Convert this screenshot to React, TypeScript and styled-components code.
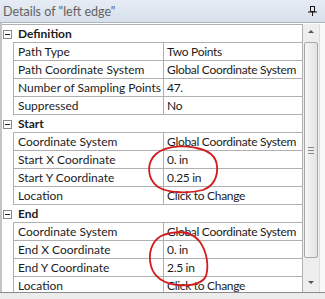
import React from 'react';
import styled, { createGlobalStyle } from 'styled-components';

type Prop = { label: string; value: string };
type Section = { title: string; rows: Prop[] };

const sections: Section[] = [
  {
    title: 'Definition',
    rows: [
      { label: 'Path Type', value: 'Two Points' },
      { label: 'Path Coordinate System', value: 'Global Coordinate System' },
      { label: 'Number of Sampling Points', value: '47.' },
      { label: 'Suppressed', value: 'No' },
    ],
  },
  {
    title: 'Start',
    rows: [
      { label: 'Coordinate System', value: 'Global Coordinate System' },
      { label: 'Start X Coordinate', value: '0. in' },
      { label: 'Start Y Coordinate', value: '0.25 in' },
      { label: 'Location', value: 'Click to Change' },
    ],
  },
  {
    title: 'End',
    rows: [
      { label: 'Coordinate System', value: 'Global Coordinate System' },
      { label: 'End X Coordinate', value: '0. in' },
      { label: 'End Y Coordinate', value: '2.5 in' },
      { label: 'Location', value: 'Click to Change' },
    ],
  },
];

export default function App() {
  return (
    <>
      <GlobalStyle />
      <Panel>
        <TitleBar>
          <Title>Details of "left edge"</Title>
          <PinIcon width="9" height="10" viewBox="0 0 9 10">
            <rect x="2.5" y="0.5" width="4" height="5" fill="none" stroke="#1a1a1a" />
            <line x1="0" y1="6" x2="9" y2="6" stroke="#1a1a1a" />
            <line x1="4.5" y1="6" x2="4.5" y2="10" stroke="#1a1a1a" />
          </PinIcon>
        </TitleBar>
        <Body>
          <Grid>
            {sections.map((s) => (
              <React.Fragment key={s.title}>
                <SectionRow>
                  <Gutter>
                    <Toggle />
                  </Gutter>
                  <SectionTitle>{s.title}</SectionTitle>
                </SectionRow>
                {s.rows.map((r, i) => (
                  <PropRow key={i}>
                    <Gutter $line />
                    <LabelCell>{r.label}</LabelCell>
                    <ValueCell>{r.value}</ValueCell>
                  </PropRow>
                ))}
              </React.Fragment>
            ))}
          </Grid>
          <ScrollBar>
            <Arrow $up />
            <Thumb>
              <Grip />
            </Thumb>
            <Arrow />
          </ScrollBar>
          <RightEdge />
        </Body>
        <Footer />
        <Marks width="325" height="299" viewBox="0 0 325 299">
          <path
            d="M 204 150 C 190 145, 168 144, 156 154 C 146 163, 147 179, 158 187 C 168 193, 188 194, 203 190 C 214 186, 218 176, 217 166 C 216 156, 208 150, 196 148"
            fill="none"
            stroke="#d01c1c"
            strokeWidth="1.8"
            strokeLinecap="round"
          />
          <path
            d="M 164 235 C 176 230, 192 231, 200 242 C 207 252, 209 266, 206 276 C 202 284, 190 286, 178 285 C 164 284, 154 277, 151 266 C 148 254, 151 242, 161 236 C 167 233, 178 231, 188 233"
            fill="none"
            stroke="#d01c1c"
            strokeWidth="1.8"
            strokeLinecap="round"
          />
        </Marks>
      </Panel>
    </>
  );
}

const GlobalStyle = createGlobalStyle`
  body {
    margin: 0;
    background: #ffffff;
    font-family: Lato, "Open Sans", sans-serif;
  }
`;

const Panel = styled.div`
  position: relative;
  width: 325px;
  height: 299px;
  display: flex;
  flex-direction: column;
  overflow: hidden;
  background: #ffffff;
`;

const TitleBar = styled.div`
  height: 22px;
  display: flex;
  align-items: center;
  justify-content: space-between;
  padding: 0 8px 0 3px;
  background: linear-gradient(#e6ecf4, #d6e0eb);
  border-bottom: 1px solid #a9b6c4;
  flex-shrink: 0;
`;

const Title = styled.span`
  font-size: 12.5px;
  color: #626262;
`;

const PinIcon = styled.svg`
  display: block;
`;

const Body = styled.div`
  flex: 1;
  display: flex;
  padding-top: 1px;
  border-left: 2px solid #c4c4c4;
  overflow: hidden;
`;

const Grid = styled.div`
  width: 300px;
  align-self: flex-start;
  border-top: 1px solid #b0b0b0;
  border-right: 1px solid #b0b0b0;
  font-size: 12px;
  color: #1c1c1c;
`;

const SectionRow = styled.div`
  display: grid;
  grid-template-columns: 11px 1fr;
  height: 18px;
`;

const PropRow = styled.div`
  display: grid;
  grid-template-columns: 12px 150px 1fr;
  height: 18px;
`;

const Gutter = styled.div<{ $line?: boolean }>`
  display: flex;
  align-items: center;
  padding-left: 1px;
  border-right: ${(p) => (p.$line ? '1px solid #b0b0b0' : 'none')};
`;

const Toggle = styled.div`
  position: relative;
  width: 9px;
  height: 9px;
  box-sizing: border-box;
  border: 1px solid #8a8a8a;
  background: #ffffff;
  &::after {
    content: '';
    position: absolute;
    left: 1px;
    top: 3px;
    width: 5px;
    height: 1px;
    background: #202020;
  }
`;

const SectionTitle = styled.div`
  display: flex;
  align-items: center;
  padding-left: 5px;
  font-weight: bold;
  border-bottom: 1px solid #b0b0b0;
`;

const LabelCell = styled.div`
  display: flex;
  align-items: center;
  padding-left: 4px;
  white-space: nowrap;
  overflow: hidden;
  border-right: 1px solid #b0b0b0;
  border-bottom: 1px solid #b0b0b0;
`;

const ValueCell = styled.div`
  display: flex;
  align-items: center;
  padding-left: 3px;
  letter-spacing: -0.3px;
  white-space: nowrap;
  overflow: hidden;
  border-bottom: 1px solid #b0b0b0;
`;

const ScrollBar = styled.div`
  width: 16px;
  display: flex;
  flex-direction: column;
  align-items: center;
  background: #eeeeee;
  padding-top: 6px;
`;

const Arrow = styled.div<{ $up?: boolean }>`
  width: 0;
  height: 0;
  border-left: 3px solid transparent;
  border-right: 3px solid transparent;
  ${(p) => (p.$up ? 'border-bottom: 3px solid #555;' : 'border-top: 3px solid #555;')}
  margin: ${(p) => (p.$up ? '0 0 9px' : '23px 0 0')};
`;

const Thumb = styled.div`
  width: 14px;
  height: 216px;
  box-sizing: border-box;
  border: 1px solid #a8a8a8;
  border-radius: 2px;
  background: linear-gradient(to right, #f6f6f6, #e2e2e2);
  display: flex;
  align-items: center;
  justify-content: center;
`;

const Grip = styled.div`
  width: 6px;
  height: 5px;
  border-top: 1px solid #8a8a8a;
  border-bottom: 1px solid #8a8a8a;
  position: relative;
  &::after {
    content: '';
    position: absolute;
    left: 0;
    top: 2px;
    width: 6px;
    height: 1px;
    background: #8a8a8a;
  }
`;

const RightEdge = styled.div`
  flex: 1;
  background: #f8f8f8;
  border-left: 1px solid #dcdcdc;
`;

const Footer = styled.div`
  height: 6px;
  flex-shrink: 0;
  border-top: 1px solid #8c8c8c;
  background: #ececec;
`;

const Marks = styled.svg`
  position: absolute;
  left: 0;
  top: 0;
  pointer-events: none;
`;
